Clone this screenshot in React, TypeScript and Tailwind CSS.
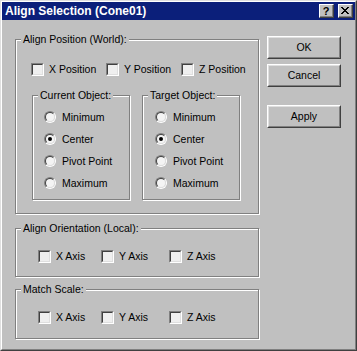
import React from "react";

const FONT = "font-['Liberation_Sans',Arial,sans-serif]";

function Checkbox({ label, width }: { label: string; width: string }) {
  return (
    <div className={`flex items-center gap-[5px] ${width}`}>
      <div className="w-[13px] h-[13px] border border-t-[#808080] border-l-[#808080] border-b-white border-r-white shrink-0">
        <div className="w-full h-full border border-t-[#404040] border-l-[#404040] border-b-[#dfdfdf] border-r-[#dfdfdf] bg-[#efefef]" />
      </div>
      <span className="text-[10.5px] leading-[13px] text-black whitespace-nowrap">{label}</span>
    </div>
  );
}

function Radio({ label, checked }: { label: string; checked?: boolean }) {
  return (
    <div className="h-[22px] flex items-center gap-[6px]">
      <div className="w-[12px] h-[12px] rounded-full border border-t-[#808080] border-l-[#808080] border-b-white border-r-white shrink-0">
        <div className="w-full h-full rounded-full border border-t-[#404040] border-l-[#404040] border-b-[#dfdfdf] border-r-[#dfdfdf] bg-[#f4f4f4] flex items-center justify-center">
          {checked && <div className="w-[4px] h-[4px] rounded-full bg-black" />}
        </div>
      </div>
      <span className="text-[10.5px] leading-[13px] text-black whitespace-nowrap">{label}</span>
    </div>
  );
}

function Group({
  title,
  className,
  children,
}: {
  title: string;
  className: string;
  children?: React.ReactNode;
}) {
  return (
    <div
      className={`relative border border-[#808080] shadow-[1px_1px_0_#ffffff,inset_1px_1px_0_#ffffff] ${className}`}
    >
      <span className="absolute left-[5px] top-[-7px] px-[2px] bg-[#c0c0c0] text-[10.5px] leading-[13px] text-black whitespace-nowrap">
        {title}
      </span>
      {children}
    </div>
  );
}

function Button({ label, className }: { label: string; className?: string }) {
  return (
    <div
      className={`w-[74px] h-[23px] border border-t-white border-l-white border-b-[#404040] border-r-[#404040] ${className ?? ""}`}
    >
      <div className="w-full h-full border border-t-[#dfdfdf] border-l-[#dfdfdf] border-b-[#808080] border-r-[#808080] flex items-center justify-center text-[10.5px] leading-[13px] text-black">
        {label}
      </div>
    </div>
  );
}

function TitleButton({ children }: { children: React.ReactNode }) {
  return (
    <div className="w-[15px] h-[14px] bg-[#c0c0c0] border border-t-white border-l-white border-b-[#404040] border-r-[#404040]">
      <div className="w-full h-full border-b border-r border-b-[#808080] border-r-[#808080] flex items-center justify-center">
        {children}
      </div>
    </div>
  );
}

export default function App() {
  return (
    <div className={`w-[357px] h-[351px] ${FONT} bg-[#c0c0c0] border border-t-[#dfdfdf] border-l-[#dfdfdf] border-b-[#404040] border-r-[#404040]`}>
      <div className="w-full h-full border border-t-white border-l-white border-b-[#808080] border-r-[#808080] flex flex-col">
        {/* Title bar */}
        <div className="h-[18px] bg-[#0b1f7a] flex items-center justify-between pl-[3px] pr-[2px]">
          <span className="text-white font-bold text-[12px] leading-[14px] whitespace-nowrap">
            Align Selection (Cone01)
          </span>
          <div className="flex items-center gap-[4px]">
            <TitleButton>
              <span className="text-black font-bold text-[11px] leading-[11px] mt-[1px]">?</span>
            </TitleButton>
            <TitleButton>
              <svg width="8" height="7" viewBox="0 0 8 7" shapeRendering="crispEdges">
                <path
                  d="M0 0h2v1h-2zM6 0h2v1h-2zM1 1h2v1h-2zM5 1h2v1h-2zM2 2h4v1h-4zM3 3h2v1h-2zM2 4h4v1h-4zM1 5h2v1h-2zM5 5h2v1h-2zM0 6h2v1h-2zM6 6h2v1h-2z"
                  fill="#000"
                />
              </svg>
            </TitleButton>
          </div>
        </div>

        {/* Body */}
        <div className="flex pl-[13px]">
          <div className="w-[244px] pt-[19px] flex flex-col">
            <Group title="Align Position (World):" className="h-[175px] pt-[23px] pl-[15px]">
              <div className="flex">
                <Checkbox label="X Position" width="w-[75px]" />
                <Checkbox label="Y Position" width="w-[75px]" />
                <Checkbox label="Z Position" width="w-[75px]" />
              </div>
              <div className="flex gap-[12px] mt-[19px] ml-[1px]">
                <Group title="Current Object:" className="w-[98px] h-[105px] pt-[10px] pl-[11px]">
                  <Radio label="Minimum" />
                  <Radio label="Center" checked />
                  <Radio label="Pivot Point" />
                  <Radio label="Maximum" />
                </Group>
                <Group title="Target Object:" className="w-[98px] h-[105px] pt-[10px] pl-[12px]">
                  <Radio label="Minimum" />
                  <Radio label="Center" checked />
                  <Radio label="Pivot Point" />
                  <Radio label="Maximum" />
                </Group>
              </div>
            </Group>

            <Group title="Align Orientation (Local):" className="mt-[14px] h-[49px] pt-[21px] pl-[22px]">
              <div className="flex">
                <Checkbox label="X Axis" width="w-[63px]" />
                <Checkbox label="Y Axis" width="w-[68px]" />
                <Checkbox label="Z Axis" width="w-[68px]" />
              </div>
            </Group>

            <Group title="Match Scale:" className="mt-[12px] h-[50px] pt-[21px] pl-[22px]">
              <div className="flex">
                <Checkbox label="X Axis" width="w-[63px]" />
                <Checkbox label="Y Axis" width="w-[68px]" />
                <Checkbox label="Z Axis" width="w-[68px]" />
              </div>
            </Group>
          </div>

          <div className="ml-[8px] pt-[16px] flex flex-col">
            <Button label="OK" />
            <Button label="Cancel" className="mt-[5px]" />
            <Button label="Apply" className="mt-[18px]" />
          </div>
        </div>
      </div>
    </div>
  );
}
